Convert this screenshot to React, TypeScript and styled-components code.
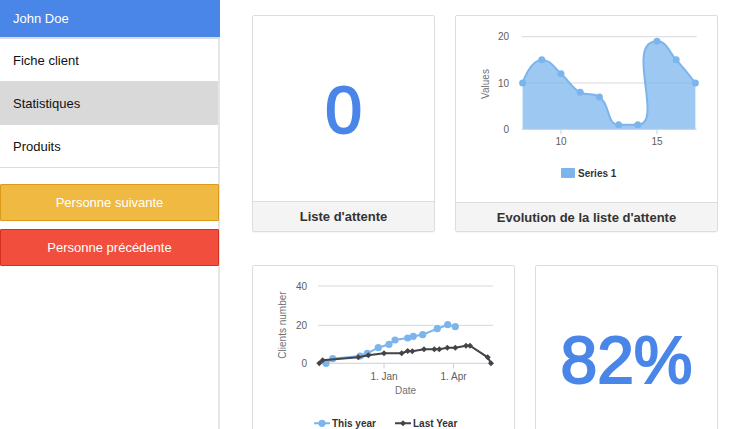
import React from 'react'
import styled, { createGlobalStyle } from 'styled-components'

const GlobalStyle = createGlobalStyle`
  html, body {
    margin: 0;
    padding: 0;
    background: #fff;
    overflow: hidden;
  }
  body {
    font-family: "Liberation Sans", Arial, sans-serif;
  }
`

type Pt = [number, number]

// highcharts style spline
function splinePath(pts: Pt[]): string {
    const smoothing = 1.5
    const denom = smoothing + 1
    const r1 = (n: number) => Math.round(n * 10) / 10
    const ctrl = pts.map((p, i) => {
        const prev = pts[i - 1]
        const next = pts[i + 1]
        if (!prev || !next) return null
        const [px, py] = p
        let lx = (smoothing * px + prev[0]) / denom
        let ly = (smoothing * py + prev[1]) / denom
        let rx = (smoothing * px + next[0]) / denom
        let ry = (smoothing * py + next[1]) / denom
        const dl = Math.hypot(lx - px, ly - py)
        const dr = Math.hypot(rx - px, ry - py)
        const la = Math.atan2(ly - py, lx - px)
        const ra = Math.atan2(ry - py, rx - px)
        let ja = Math.PI / 2 + (la + ra) / 2
        if (Math.abs(la - ja) > Math.PI / 2) ja -= Math.PI
        lx = px + Math.cos(ja) * dl
        ly = py + Math.sin(ja) * dl
        rx = px + Math.cos(Math.PI + ja) * dr
        ry = py + Math.sin(Math.PI + ja) * dr
        if (ly > prev[1] && ly > py) {
            ly = Math.max(prev[1], py)
            ry = 2 * py - ly
        } else if (ly < prev[1] && ly < py) {
            ly = Math.min(prev[1], py)
            ry = 2 * py - ly
        }
        if (ry > next[1] && ry > py) {
            ry = Math.max(next[1], py)
            ly = 2 * py - ry
        } else if (ry < next[1] && ry < py) {
            ry = Math.min(next[1], py)
            ly = 2 * py - ry
        }
        return { l: [lx, ly] as Pt, r: [rx, ry] as Pt }
    })
    let d = `M${r1(pts[0][0])} ${r1(pts[0][1])}`
    for (let i = 1; i < pts.length; i++) {
        const a = ctrl[i - 1]?.r ?? pts[i - 1]
        const b = ctrl[i]?.l ?? pts[i]
        d += ` C${r1(a[0])} ${r1(a[1])} ${r1(b[0])} ${r1(b[1])} ${r1(pts[i][0])} ${r1(pts[i][1])}`
    }
    return d
}

const linePath = (pts: Pt[]) => pts.map((p, i) => `${i ? 'L' : 'M'}${p[0]} ${p[1]}`).join(' ')

const Page = styled.div`
    display: flex;
    height: 429px;
`

const Sidebar = styled.aside`
    width: 218px;
    flex: none;
    border-right: 2px solid #e6e6e6;
    display: flex;
    flex-direction: column;
`

const Profile = styled.div`
    height: 37px;
    margin-right: -2px;
    padding-left: 13px;
    display: flex;
    align-items: center;
    background: #4a86e8;
    color: #fff;
    font-size: 13px;
    border-bottom: 2px solid #dcdcdc;
`

const NavItem = styled.div<{ $active?: boolean }>`
    height: 42px;
    padding-left: 13px;
    display: flex;
    align-items: center;
    font-size: 13px;
    color: #111;
    background: ${({ $active }) => ($active ? '#d9d9d9' : '#fff')};
    border-bottom: 1px solid #dcdcdc;
`

const Actions = styled.div`
    display: flex;
    flex-direction: column;
    gap: 8px;
    padding-top: 16px;
    margin-right: -1px;
`

const tones = {
    warning: { bg: '#f0b941', border: '#dc9a1c' },
    danger: { bg: '#f14e3e', border: '#d1311f' },
}

const ActionButton = styled.button<{ $tone: keyof typeof tones }>`
    height: 37px;
    box-sizing: border-box;
    margin: 0;
    border: 1px solid ${({ $tone }) => tones[$tone].border};
    border-radius: 1px;
    background: ${({ $tone }) => tones[$tone].bg};
    color: #fff;
    font-family: "Liberation Sans", Arial, sans-serif;
    font-size: 13px;
    cursor: pointer;
`

const Main = styled.main`
    flex: 1;
    padding: 15px 32px 0 32px;
    display: flex;
    flex-direction: column;
    gap: 33px;
`

const Row = styled.div`
    display: flex;
    gap: 20px;
`

const Card = styled.section<{ $width: number }>`
    width: ${({ $width }) => $width}px;
    height: 217px;
    flex: none;
    box-sizing: border-box;
    border: 1px solid #dddddd;
    border-radius: 2px;
    box-shadow: 0 1px 1px rgba(0, 0, 0, 0.04);
    display: flex;
    flex-direction: column;
    overflow: hidden;
`

const CardBody = styled.div<{ $open?: boolean }>`
    flex: ${({ $open }) => ($open ? 'none' : '1')};
    height: ${({ $open }) => ($open ? '186px' : 'auto')};
    display: flex;
    align-items: center;
    justify-content: center;
`

const CardFooter = styled.div`
    height: 29px;
    flex: none;
    border-top: 1px solid #dddddd;
    background: #f4f4f4;
    display: flex;
    align-items: center;
    justify-content: center;
    font-size: 13px;
    font-weight: bold;
    color: #333;
`

const BigNumber = styled.div`
    font-size: 66px;
    line-height: 1;
    color: #4a86e8;
    -webkit-text-stroke: 2px #4a86e8;
    margin-top: 2px;
`

const ChartSvg = styled.svg`
    display: block;
    width: 261px;
    height: 186px;
    font-family: "Liberation Sans", Arial, sans-serif;
`

const AxisLabel = styled.text`
    font-size: 10px;
    fill: #606060;
`

const AxisTitle = styled.text`
    font-size: 10px;
    fill: #707070;
`

const LegendText = styled.text`
    font-size: 10px;
    font-weight: bold;
    fill: #333333;
`

const BLUE = '#7cb5ec'
const DARK = '#434348'
const GRID = '#d8d8d8'
const AXIS = '#c0d0e0'

const waitValues = [10, 15, 12, 8, 7, 1, 1, 19, 15, 10]

function WaitingChart() {
    const x = (v: number) => 561 + (v - 10) * 19.2
    const y = (v: number) => 129.3 - v * 4.63
    const pts: Pt[] = waitValues.map((v, i) => [x(8 + i), y(v)])
    const curve = splinePath(pts)
    const area = `${curve} L${pts[pts.length - 1][0]} ${y(0)} L${pts[0][0]} ${y(0)} Z`
    return (
        <ChartSvg viewBox="456 16 261 186">
            {[20, 10].map(v => (
                <line key={v} x1={521.7} x2={696.7} y1={y(v)} y2={y(v)} stroke={GRID} strokeWidth={1} />
            ))}
            {[20, 10, 0].map(v => (
                <AxisLabel key={v} x={509} y={y(v) + 3.5} textAnchor="end">{v}</AxisLabel>
            ))}
            <AxisTitle transform="translate(489 84) rotate(-90)" textAnchor="middle">Values</AxisTitle>
            <path d={area} fill={BLUE} fillOpacity={0.75} />
            <path d={curve} fill="none" stroke={BLUE} strokeWidth={2} />
            {pts.map((p, i) => (
                <circle key={i} cx={p[0]} cy={p[1]} r={3.5} fill={BLUE} />
            ))}
            <line x1={521.7} x2={696.7} y1={y(0)} y2={y(0)} stroke={AXIS} strokeWidth={1} />
            {[10, 15].map(v => (
                <g key={v}>
                    <line x1={x(v)} x2={x(v)} y1={y(0)} y2={y(0) + 5} stroke={AXIS} />
                    <AxisLabel x={x(v)} y={145} textAnchor="middle">{v}</AxisLabel>
                </g>
            ))}
            <rect x={561} y={168} width={14} height={10} rx={1} fill={BLUE} />
            <LegendText x={578} y={177}>Series 1</LegendText>
        </ChartSvg>
    )
}

const thisYear: Pt[] = [
    [326, 363.3], [332.7, 358.7], [360, 356], [367.3, 353.3], [378.3, 347.7], [389, 344.3],
    [395, 340], [407.7, 338], [413.3, 336.3], [422.7, 334.7], [437.3, 328.7], [447.7, 324.7], [455.3, 326.7],
]

const lastYear: Pt[] = [
    [319.3, 363.3], [322.7, 360.3], [358.3, 357.3], [368.3, 355.3], [384, 353.3], [401.7, 353.3],
    [407.7, 351], [412.3, 351.3], [424, 349.3], [434.3, 349.3], [439.3, 349.3], [447.3, 347.7],
    [455.3, 347.7], [466, 345.7], [470, 345.7], [487.7, 357.3], [491, 363.3],
]

const diamond = (cx: number, cy: number, s: number) =>
    `M${cx} ${cy - s} L${cx + s} ${cy} L${cx} ${cy + s} L${cx - s} ${cy} Z`

function ClientsChart() {
    const grid = [
        { v: 40, y: 286 },
        { v: 20, y: 325.3 },
    ]
    return (
        <ChartSvg viewBox="253 266 261 186">
            {grid.map(g => (
                <line key={g.v} x1={318} x2={493} y1={g.y} y2={g.y} stroke={GRID} strokeWidth={1} />
            ))}
            {[...grid, { v: 0, y: 363.3 }].map(g => (
                <AxisLabel key={g.v} x={307} y={g.y + 3.5} textAnchor="end">{g.v}</AxisLabel>
            ))}
            <AxisTitle transform="translate(286 325) rotate(-90)" textAnchor="middle">Clients number</AxisTitle>
            <line x1={318} x2={493} y1={363.3} y2={363.3} stroke={AXIS} strokeWidth={1} />
            {[{ x: 384, t: '1. Jan' }, { x: 453.5, t: '1. Apr' }].map(l => (
                <g key={l.t}>
                    <line x1={l.x} x2={l.x} y1={363.3} y2={368.3} stroke={AXIS} />
                    <AxisLabel x={l.x} y={380} textAnchor="middle">{l.t}</AxisLabel>
                </g>
            ))}
            <AxisTitle x={405.5} y={393.5} textAnchor="middle">Date</AxisTitle>
            <path d={linePath(thisYear)} fill="none" stroke={BLUE} strokeWidth={2} />
            {thisYear.map((p, i) => (
                <circle key={i} cx={p[0]} cy={p[1]} r={3.6} fill={BLUE} />
            ))}
            <path d={linePath(lastYear)} fill="none" stroke={DARK} strokeWidth={2} />
            {lastYear.map((p, i) => (
                <path key={i} d={diamond(p[0], p[1], 3)} fill={DARK} />
            ))}
            <line x1={314} x2={330} y1={423.3} y2={423.3} stroke={BLUE} strokeWidth={2} />
            <circle cx={322} cy={423.3} r={3.6} fill={BLUE} />
            <LegendText x={332} y={427}>This year</LegendText>
            <line x1={395} x2={411} y1={423.3} y2={423.3} stroke={DARK} strokeWidth={2} />
            <path d={diamond(403, 423.3, 3)} fill={DARK} />
            <LegendText x={413} y={427}>Last Year</LegendText>
        </ChartSvg>
    )
}

export default function App() {
    return (
        <>
            <GlobalStyle />
            <Page>
                <Sidebar>
                    <Profile>John Doe</Profile>
                    <NavItem>Fiche client</NavItem>
                    <NavItem $active>Statistiques</NavItem>
                    <NavItem>Produits</NavItem>
                    <Actions>
                        <ActionButton $tone="warning">Personne suivante</ActionButton>
                        <ActionButton $tone="danger">Personne précédente</ActionButton>
                    </Actions>
                </Sidebar>
                <Main>
                    <Row>
                        <Card $width={183}>
                            <CardBody>
                                <BigNumber>0</BigNumber>
                            </CardBody>
                            <CardFooter>Liste d'attente</CardFooter>
                        </Card>
                        <Card $width={263}>
                            <CardBody>
                                <WaitingChart />
                            </CardBody>
                            <CardFooter>Evolution de la liste d'attente</CardFooter>
                        </Card>
                    </Row>
                    <Row>
                        <Card $width={263}>
                            <CardBody $open>
                                <ClientsChart />
                            </CardBody>
                        </Card>
                        <Card $width={183}>
                            <CardBody $open>
                                <BigNumber>82%</BigNumber>
                            </CardBody>
                        </Card>
                    </Row>
                </Main>
            </Page>
        </>
    )
}
